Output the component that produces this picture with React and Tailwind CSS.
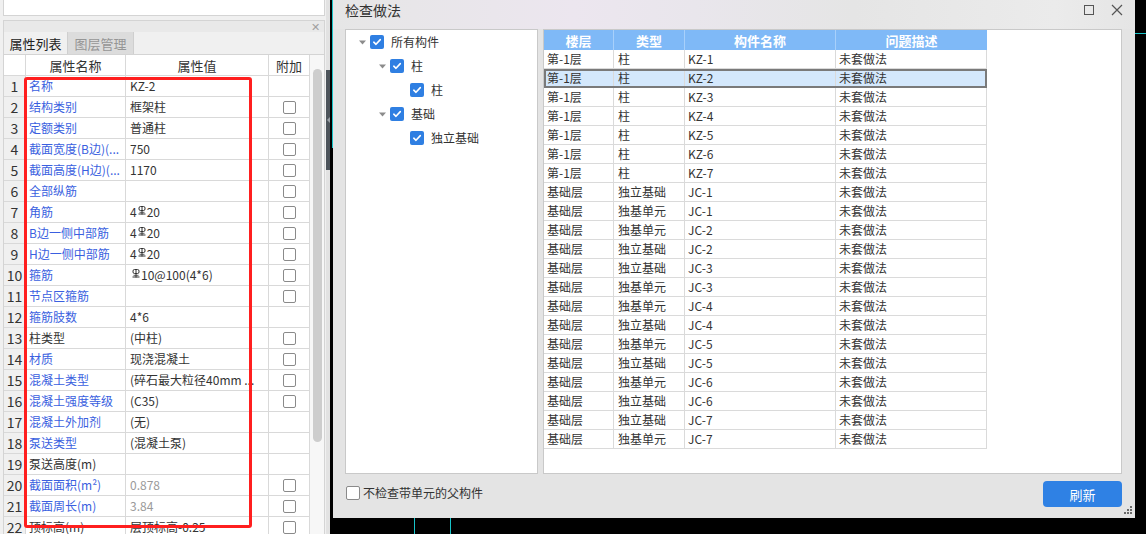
import React from "react";

function Rebar() {
  return (
    <svg width="8" height="9" viewBox="0 0 8 9" className="inline-block mx-[1px] relative top-[-3px]">
      <rect x="1" y="0.5" width="6" height="4" rx="1.5" fill="none" stroke="#333" strokeWidth="1" />
      <line x1="4" y1="0" x2="4" y2="8.5" stroke="#333" strokeWidth="1" />
      <line x1="0.5" y1="8" x2="7.5" y2="8" stroke="#333" strokeWidth="1" />
      <line x1="1.5" y1="6.3" x2="6.5" y2="6.3" stroke="#333" strokeWidth="0.8" />
    </svg>
  );
}

const leftRows = [
  { n: 1, name: "名称", blue: true, val: "KZ-2", cb: false },
  { n: 2, name: "结构类别", blue: true, val: "框架柱", cb: true },
  { n: 3, name: "定额类别", blue: true, val: "普通柱", cb: true },
  { n: 4, name: "截面宽度(B边)(...", blue: true, val: "750", cb: true },
  { n: 5, name: "截面高度(H边)(...", blue: true, val: "1170", cb: true },
  { n: 6, name: "全部纵筋", blue: true, val: "", cb: true },
  { n: 7, name: "角筋", blue: true, val: "R4", cb: true },
  { n: 8, name: "B边一侧中部筋", blue: true, val: "R4", cb: true },
  { n: 9, name: "H边一侧中部筋", blue: true, val: "R4", cb: true },
  { n: 10, name: "箍筋", blue: true, val: "R10", cb: true },
  { n: 11, name: "节点区箍筋", blue: true, val: "", cb: true },
  { n: 12, name: "箍筋肢数", blue: true, val: "4*6", cb: false },
  { n: 13, name: "柱类型", blue: false, val: "(中柱)", cb: true },
  { n: 14, name: "材质", blue: true, val: "现浇混凝土", cb: true },
  { n: 15, name: "混凝土类型", blue: true, val: "(碎石最大粒径40mm ...", cb: true },
  { n: 16, name: "混凝土强度等级", blue: true, val: "(C35)", cb: true },
  { n: 17, name: "混凝土外加剂", blue: true, val: "(无)", cb: false },
  { n: 18, name: "泵送类型", blue: true, val: "(混凝土泵)", cb: false },
  { n: 19, name: "泵送高度(m)", blue: false, val: "", cb: false },
  { n: 20, name: "截面面积(m²)", blue: true, val: "0.878", gray: true, cb: true },
  { n: 21, name: "截面周长(m)", blue: true, val: "3.84", gray: true, cb: true },
  { n: 22, name: "顶标高(m)", blue: false, val: "层顶标高-0.25", cb: true },
];

function renderVal(r) {
  if (r.val === "R4")
    return (
      <span className="flex items-end">
        4<Rebar />20
      </span>
    );
  if (r.val === "R10")
    return (
      <span className="flex items-end ml-[1px]">
        <Rebar />10@100(4*6)
      </span>
    );
  return <span className={r.gray ? "text-[#9a9a9a]" : ""}>{r.val}</span>;
}

function Box() {
  return <div className="w-[13px] h-[13px] bg-white border border-[#8a8a8a] rounded-[2px]" />;
}

function LeftPanel() {
  return (
    <div className="w-[326px] h-full bg-[#f0f0f0] shrink-0 flex flex-col pl-[3px] pr-[1px] relative">
      <div className="h-[16px] bg-white border border-t-0 border-[#d4d4d4]" />
      <div className="h-[4px]" />
      <div className="h-[12px] border-t border-x border-[#d4d4d4] bg-[#e9e9e9] flex justify-end items-center pr-[4px]">
        <span className="text-[11px] leading-none text-[#a0a0a0]">✕</span>
      </div>
      <div className="h-[22px] flex border-x border-[#d4d4d4] bg-[#f0f0f0]">
        <div className="w-[64px] flex items-center justify-center text-[13px] text-[#222] border-r border-[#cfcfcf]">属性列表</div>
        <div className="w-[66px] flex items-center justify-center text-[13px] text-[#959595] bg-[#dcdcdc] border-r border-[#cfcfcf]">图层管理</div>
      </div>
      <div className="flex-1 flex border-t border-l border-[#d4d4d4] overflow-hidden">
        <div className="w-[306px] flex flex-col text-[12px]">
          <div className="h-[21px] flex bg-white shrink-0 text-[13px]">
            <div className="w-[22px] border-r border-b border-[#d9d9d9]" />
            <div className="w-[100px] border-r border-b border-[#d9d9d9] flex items-center justify-center">属性名称</div>
            <div className="w-[143px] border-r border-b border-[#d9d9d9] flex items-center justify-center">属性值</div>
            <div className="w-[41px] border-r border-b border-[#d9d9d9] flex items-center justify-center">附加</div>
          </div>
          {leftRows.map((r) => (
            <div key={r.n} className="h-[21px] flex shrink-0">
              <div className="w-[22px] bg-[#f0f0f0] border-r border-b border-[#d9d9d9] flex items-center justify-center text-[#333] text-[14px]">{r.n}</div>
              <div className={"w-[100px] bg-white border-r border-b border-[#d9d9d9] flex items-center pl-[3px] whitespace-nowrap overflow-hidden " + (r.blue ? "text-[#3a5fe0]" : "text-[#333]")}>{r.name}</div>
              <div className="w-[143px] bg-white border-r border-b border-[#d9d9d9] flex items-center pl-[4px] whitespace-nowrap overflow-hidden">{renderVal(r)}</div>
              <div className="w-[41px] bg-white border-r border-b border-[#d9d9d9] flex items-center justify-center pl-[1px]">{r.cb ? <Box /> : null}</div>
            </div>
          ))}
        </div>
        <div className="w-[16px] bg-[#f7f7f7] border-r border-[#d4d4d4] flex justify-center pt-[14px]">
          <div className="w-[9px] h-[373px] rounded-full bg-[#cdcdcd]" />
        </div>
      </div>
      <div className="absolute left-[24px] top-[77px] w-[228px] h-[451px] border-[3px] border-[#ff1f1f] rounded-[3px] pointer-events-none" />
    </div>
  );
}

function Check({ checked }) {
  if (!checked) return <Box />;
  return (
    <div className="w-[14px] h-[14px] rounded-[2px] bg-[#2f7fe2] flex items-center justify-center shrink-0">
      <svg width="10" height="10" viewBox="0 0 10 10">
        <path d="M1.8 5.2 L4 7.3 L8.3 2.6" fill="none" stroke="white" strokeWidth="1.6" strokeLinecap="round" strokeLinejoin="round" />
      </svg>
    </div>
  );
}

const tree = [
  { level: 0, label: "所有构件", arrow: true },
  { level: 1, label: "柱", arrow: true },
  { level: 2, label: "柱", arrow: false },
  { level: 1, label: "基础", arrow: true },
  { level: 2, label: "独立基础", arrow: false },
];

const tableRows = [
  ["第-1层", "柱", "KZ-1"],
  ["第-1层", "柱", "KZ-2"],
  ["第-1层", "柱", "KZ-3"],
  ["第-1层", "柱", "KZ-4"],
  ["第-1层", "柱", "KZ-5"],
  ["第-1层", "柱", "KZ-6"],
  ["第-1层", "柱", "KZ-7"],
  ["基础层", "独立基础", "JC-1"],
  ["基础层", "独基单元", "JC-1"],
  ["基础层", "独基单元", "JC-2"],
  ["基础层", "独立基础", "JC-2"],
  ["基础层", "独立基础", "JC-3"],
  ["基础层", "独基单元", "JC-3"],
  ["基础层", "独基单元", "JC-4"],
  ["基础层", "独立基础", "JC-4"],
  ["基础层", "独基单元", "JC-5"],
  ["基础层", "独立基础", "JC-5"],
  ["基础层", "独基单元", "JC-6"],
  ["基础层", "独立基础", "JC-6"],
  ["基础层", "独立基础", "JC-7"],
  ["基础层", "独基单元", "JC-7"],
];

function Dialog() {
  return (
    <div className="h-[518px] bg-[#e4e4e4] flex flex-col relative">
      <div className="h-[29px] flex items-center pl-[12px] pr-[12px] bg-[linear-gradient(90deg,#e6e6e6_0%,#ece6ef_30%,#e9e6ec_45%,#e5e5e5_65%,#ebebeb_90%,#e5e5e5_100%)]">
        <span className="text-[14px] text-[#333] leading-none -mt-[9px]">检查做法</span>
        <div className="flex-1" />
        <div className="flex items-center gap-[17px] -mt-[9px]">
          <div className="w-[10px] h-[10px] border border-[#555]" />
          <svg width="12" height="12" viewBox="0 0 12 12">
            <path d="M1 1 L11 11 M11 1 L1 11" stroke="#555" strokeWidth="1.2" />
          </svg>
        </div>
      </div>
      <div className="h-[445px] flex pl-[12px] gap-[5px]">
        <div className="w-[193px] h-full bg-white border border-[#c9c9c9] text-[12px]">
          {tree.map((t, i) => (
            <div key={i} className="h-[24px] flex items-center" style={{ paddingLeft: 13 + t.level * 20 }}>
              <div className="w-[11px] shrink-0">
                {t.arrow ? (
                  <svg width="7" height="5" viewBox="0 0 7 5">
                    <path d="M0 0.5 L7 0.5 L3.5 4.5 Z" fill="#8c8c8c" />
                  </svg>
                ) : null}
              </div>
              <Check checked />
              <span className="ml-[7px] text-[#333]">{t.label}</span>
            </div>
          ))}
        </div>
        <div className="w-[579px] h-full bg-white border border-[#c9c9c9] text-[12px]">
          <div className="w-[443px]">
            <div className="h-[20px] flex bg-[#7fb9f7] text-white font-bold text-[13px]">
              <div className="w-[70px] border-r border-[#a8d0fb] flex items-center justify-center">楼层</div>
              <div className="w-[71px] border-r border-[#a8d0fb] flex items-center justify-center">类型</div>
              <div className="w-[151px] border-r border-[#a8d0fb] flex items-center justify-center">构件名称</div>
              <div className="w-[151px] flex items-center justify-center">问题描述</div>
            </div>
            {tableRows.map((r, i) => (
              <div
                key={i}
                className={
                  "h-[19px] flex " +
                  (i === 1 ? "bg-[#d4e8fc] outline-2 -outline-offset-2 outline-[#7a7a7a]" : "bg-white")
                }
              >
                <div className="w-[70px] border-r border-b border-[#dadada] flex items-center pl-[3px] whitespace-nowrap">{r[0]}</div>
                <div className="w-[71px] border-r border-b border-[#dadada] flex items-center pl-[4px] whitespace-nowrap">{r[1]}</div>
                <div className="w-[151px] border-r border-b border-[#dadada] flex items-center pl-[3px] whitespace-nowrap">{r[2]}</div>
                <div className="w-[151px] border-r border-b border-[#dadada] flex items-center pl-[3px] whitespace-nowrap">未套做法</div>
              </div>
            ))}
          </div>
        </div>
      </div>
      <div className="flex-1 flex items-start pt-[7px] pl-[13px] pr-[13px]">
        <div className="flex items-center mt-[5px] gap-[3px] text-[12px]">
          <div className="w-[14px] h-[14px] bg-white border border-[#8a8a8a] rounded-[2px]" />
          <span className="text-[#333] leading-none">不检查带单元的父构件</span>
        </div>
        <div className="flex-1" />
        <div className="w-[79px] h-[26px] rounded-[4px] bg-[#2f81e4] text-white flex items-center justify-center text-[13px]">刷新</div>
      </div>
      <svg width="8" height="8" viewBox="0 0 8 8" className="absolute right-[3px] bottom-[4px]">
        <rect x="6" y="0" width="2" height="2" fill="#6a6a6a" />
        <rect x="3" y="3" width="2" height="2" fill="#6a6a6a" />
        <rect x="6" y="3" width="2" height="2" fill="#6a6a6a" />
        <rect x="0" y="6" width="2" height="2" fill="#6a6a6a" />
        <rect x="3" y="6" width="2" height="2" fill="#6a6a6a" />
        <rect x="6" y="6" width="2" height="2" fill="#6a6a6a" />
      </svg>
    </div>
  );
}

export default function App() {
  return (
    <div className="w-[1146px] h-[534px] overflow-hidden bg-black flex text-[13px] leading-none text-[#333] font-['Microsoft_YaHei','Noto_Sans_CJK_SC',sans-serif]">
      <LeftPanel />
      <div className="w-[4px] h-full bg-[#e2e2e2] flex flex-col shrink-0">
        <div className="h-[70px]" />
        <div className="h-[100px] bg-[#4d545b] flex items-center justify-center">
          <svg width="3" height="6" viewBox="0 0 3 6">
            <path d="M3 0 L0 3 L3 6 Z" fill="#9aa0a6" />
          </svg>
        </div>
      </div>
      <div className="w-[3px] h-full bg-black flex justify-end shrink-0">
        <div className="w-[1px] h-[148px] bg-[#18c4c9]" />
      </div>
      <div className="w-[802px] h-full flex flex-col shrink-0">
        <Dialog />
        <div className="flex-1 bg-black flex">
          <div className="w-[81px]" />
          <div className="w-[1px] h-full bg-[#18c4c9]" />
          <div className="w-[35px]" />
          <div className="w-[1px] h-full bg-[#18c4c9]" />
        </div>
      </div>
      <div className="flex-1 h-full bg-black flex flex-col">
        <div className="h-[33px]" />
        <div className="h-[1px] bg-[#18c4c9]" />
      </div>
    </div>
  );
}
